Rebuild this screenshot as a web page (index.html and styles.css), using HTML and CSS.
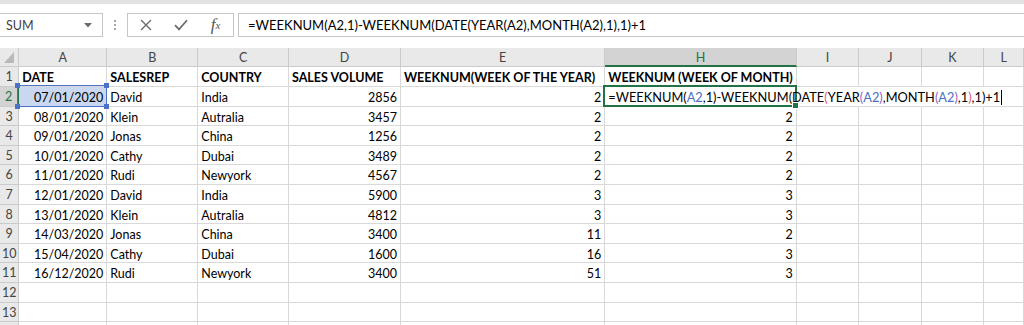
FILE: index.html
```html
<html>
    <head>
        <link rel="stylesheet" href="styles.css">
    </head>
    <body>
        <div class="top-strip"></div>

        <div class="formula-bar">
            <div class="name-box">
                <span>SUM</span>
                <svg class="caret" width="8" height="5" viewBox="0 0 8 5"><path d="M0 0H8L4 4.5Z" fill="#6b6b6b"/></svg>
            </div>
            <div class="grip"><i></i><i></i><i></i></div>
            <div class="fx-buttons">
                <div class="fx-btn">
                    <svg width="12" height="12" viewBox="0 0 12 12"><path d="M1 1L11 11M11 1L1 11" stroke="#6b6b6b" stroke-width="1.4" fill="none"/></svg>
                </div>
                <div class="fx-btn">
                    <svg width="14" height="12" viewBox="0 0 14 12"><path d="M1 6.2L5 10.4L13 1.2" stroke="#6b6b6b" stroke-width="1.7" fill="none"/></svg>
                </div>
                <div class="fx-btn fx"><i>f</i><sub>x</sub></div>
            </div>
            <div class="formula-input">=WEEKNUM(A2,1)-WEEKNUM(DATE(YEAR(A2),MONTH(A2),1),1)+1</div>
        </div>

        <div id="sheet" class="sheet"></div>

        <script>
            var letters = ['A', 'B', 'C', 'D', 'E', 'H', 'I', 'J', 'K', 'L'];
            var align = ['num', '', '', 'num', 'num', 'num', '', '', '', ''];

            var titles = ['DATE', 'SALESREP', 'COUNTRY', 'SALES VOLUME', 'WEEKNUM(WEEK OF THE YEAR)', 'WEEKNUM (WEEK OF MONTH)'];
            var data = [
                ['07/01/2020', 'David', 'India', '2856', '2', ''],
                ['08/01/2020', 'Klein', 'Autralia', '3457', '2', '2'],
                ['09/01/2020', 'Jonas', 'China', '1256', '2', '2'],
                ['10/01/2020', 'Cathy', 'Dubai', '3489', '2', '2'],
                ['11/01/2020', 'Rudi', 'Newyork', '4567', '2', '2'],
                ['12/01/2020', 'David', 'India', '5900', '3', '3'],
                ['13/01/2020', 'Klein', 'Autralia', '4812', '3', '3'],
                ['14/03/2020', 'Jonas', 'China', '3400', '11', '2'],
                ['15/04/2020', 'Cathy', 'Dubai', '1600', '16', '3'],
                ['16/12/2020', 'Rudi', 'Newyork', '3400', '51', '3']
            ];

            var formula = '=WEEKNUM(<span class="ref">A2</span>,1)-WEEKNUM(DATE<span class="p2">(</span>YEAR<span class="p3">(</span>' +
                '<span class="ref">A2</span><span class="p3">)</span>,MONTH<span class="p3">(</span><span class="ref">A2</span>' +
                '<span class="p3">)</span>,1<span class="p2">)</span>,1)+1<span class="text-cursor"></span>';

            var sheet = document.getElementById('sheet');

            function addCell(cls, html) {
                var div = document.createElement('div');
                div.className = 'cell ' + cls;
                div.innerHTML = html;
                sheet.appendChild(div);
                return div;
            }

            // column headers
            addCell('head corner', '<svg width="10" height="11" viewBox="0 0 10 11"><path d="M10 0V11H0Z" fill="#b9b9b9"/></svg>');
            letters.forEach(function (l) {
                addCell('head col-head' + (l === 'H' ? ' active' : ''), l);
            });

            // row 14 only peeks in at the bottom edge, so no number
            for (var r = 1; r <= 14; r++) {
                addCell('head row-head' + (r === 2 ? ' active' : ''), r < 14 ? r : '');
                for (var c = 0; c < letters.length; c++) {
                    var text = '';
                    var cls = align[c];
                    if (r === 1 && c < titles.length) {
                        text = titles[c];
                        cls = 'title';
                    } else if (r >= 2 && r <= 11 && c < 6) {
                        text = data[r - 2][c];
                    }
                    if (r === 2 && c === 0) cls += ' ref-cell';
                    if (r === 2 && c === 5) {
                        cls = 'editing';
                        text = '<span class="spill">' + formula + '</span>';
                    }
                    if (r === 2 && c > 5 && c < 9) cls += ' no-right';
                    addCell(cls, text);
                }
            }

            // handles on the referenced cell
            var refCell = document.querySelector('.ref-cell');
            ['tl', 'tr', 'bl', 'br'].forEach(function (p) {
                var h = document.createElement('b');
                h.className = 'handle ' + p;
                refCell.appendChild(h);
            });
        </script>
    </body>
</html>
```

FILE: styles.css
```css
html, body {
    margin: 0;
    padding: 0;
    background: #fff;
    color: #000;
    font-family: Lato, "Open Sans", sans-serif;
    overflow: hidden;
}
.top-strip {
    height: 4px;
    background: #e2e2e2;
}
.formula-bar {
    display: flex;
    height: 24px;
    margin-top: 9px;
}
.name-box {
    box-sizing: border-box;
    width: 104px;
    margin-left: -1px;
    border: 1px solid #c6c6c6;
    display: flex;
    align-items: center;
    justify-content: space-between;
    padding: 0 10px 0 6px;
    font-size: 12.5px;
    color: #444;
}
.grip {
    width: 24px;
    display: flex;
    flex-direction: column;
    align-items: center;
    justify-content: center;
    gap: 2px;
}
.grip i {
    width: 2px;
    height: 2px;
    background: #a8a8a8;
}
.fx-buttons {
    display: flex;
    border: 1px solid #c6c6c6;
}
.fx-btn {
    width: 35px;
    display: flex;
    align-items: center;
    justify-content: center;
}
.fx {
    font-family: "Liberation Serif", serif;
    color: #555;
    font-size: 17px;
}
.fx sub {
    font-size: 11px;
    font-style: italic;
    vertical-align: -2px;
}
.formula-input {
    flex: 1;
    margin-left: 4px;
    margin-right: -1px;
    border: 1px solid #c6c6c6;
    padding-left: 9px;
    font-size: 13px;
    line-height: 22px;
    white-space: nowrap;
}
.sheet {
    display: grid;
    grid-template-columns: 19.3px 88px 91px 90.7px 112px 204.3px 191.4px 62.6px 62.4px 62.6px 1fr;
    grid-template-rows: 19.4px repeat(14, 19.6px);
    margin-top: 11px;
}
.cell {
    box-sizing: border-box;
    position: relative;
    border-right: 1px solid #d9d9d9;
    border-bottom: 1px solid #d9d9d9;
    padding: 1px 3px 0 3px;
    font-size: 12.5px;
    line-height: 19px;
    white-space: nowrap;
}
.num {
    text-align: right;
}
.title {
    font-weight: bold;
}
.head {
    background: #e9e9e9;
    color: #444;
    text-align: center;
    padding: 0;
    border-color: #cbcbcb;
    font-size: 12.5px;
}
.corner {
    display: flex;
    align-items: flex-end;
    justify-content: flex-end;
    padding: 0 4px 3px 0;
}
.col-head.active {
    background: #d3d3d3;
    color: #217346;
    border-bottom: 2px solid #217346;
}
.row-head.active {
    background: #d3d3d3;
    color: #217346;
    border-right: 2px solid #217346;
}
.no-right {
    border-right-color: transparent;
}
.ref-cell {
    background: #c9d7f0;
}
.ref-cell:after {
    content: '';
    position: absolute;
    top: -2px;
    left: -2px;
    right: -1px;
    bottom: -1px;
    border: 1.5px solid #4a72c6;
}
.handle {
    position: absolute;
    width: 5px;
    height: 5px;
    background: #4a72c6;
    z-index: 2;
}
.handle.tl { top: -4px; left: -4px; }
.handle.tr { top: -4px; right: -3px; }
.handle.bl { bottom: -3px; left: -4px; }
.handle.br { bottom: -3px; right: -3px; }
.editing {
    z-index: 1;
}
.editing:after {
    content: '';
    position: absolute;
    top: -2px;
    left: -2px;
    right: -1px;
    bottom: -1px;
    border: 2px solid #217346;
}
.editing:before {
    content: '';
    position: absolute;
    right: -3px;
    bottom: -3px;
    width: 5px;
    height: 5px;
    background: #217346;
    border: 1px solid #fff;
    z-index: 2;
}
.spill {
    position: relative;
    z-index: 1;
    font-size: 12.8px;
}
.ref {
    color: #4a72c6;
}
.p2 {
    color: #e0567a;
}
.p3 {
    color: #9561c0;
}
.text-cursor {
    display: inline-block;
    width: 1px;
    height: 15px;
    background: #000;
    vertical-align: -3px;
    margin-left: 1px;
}
```
